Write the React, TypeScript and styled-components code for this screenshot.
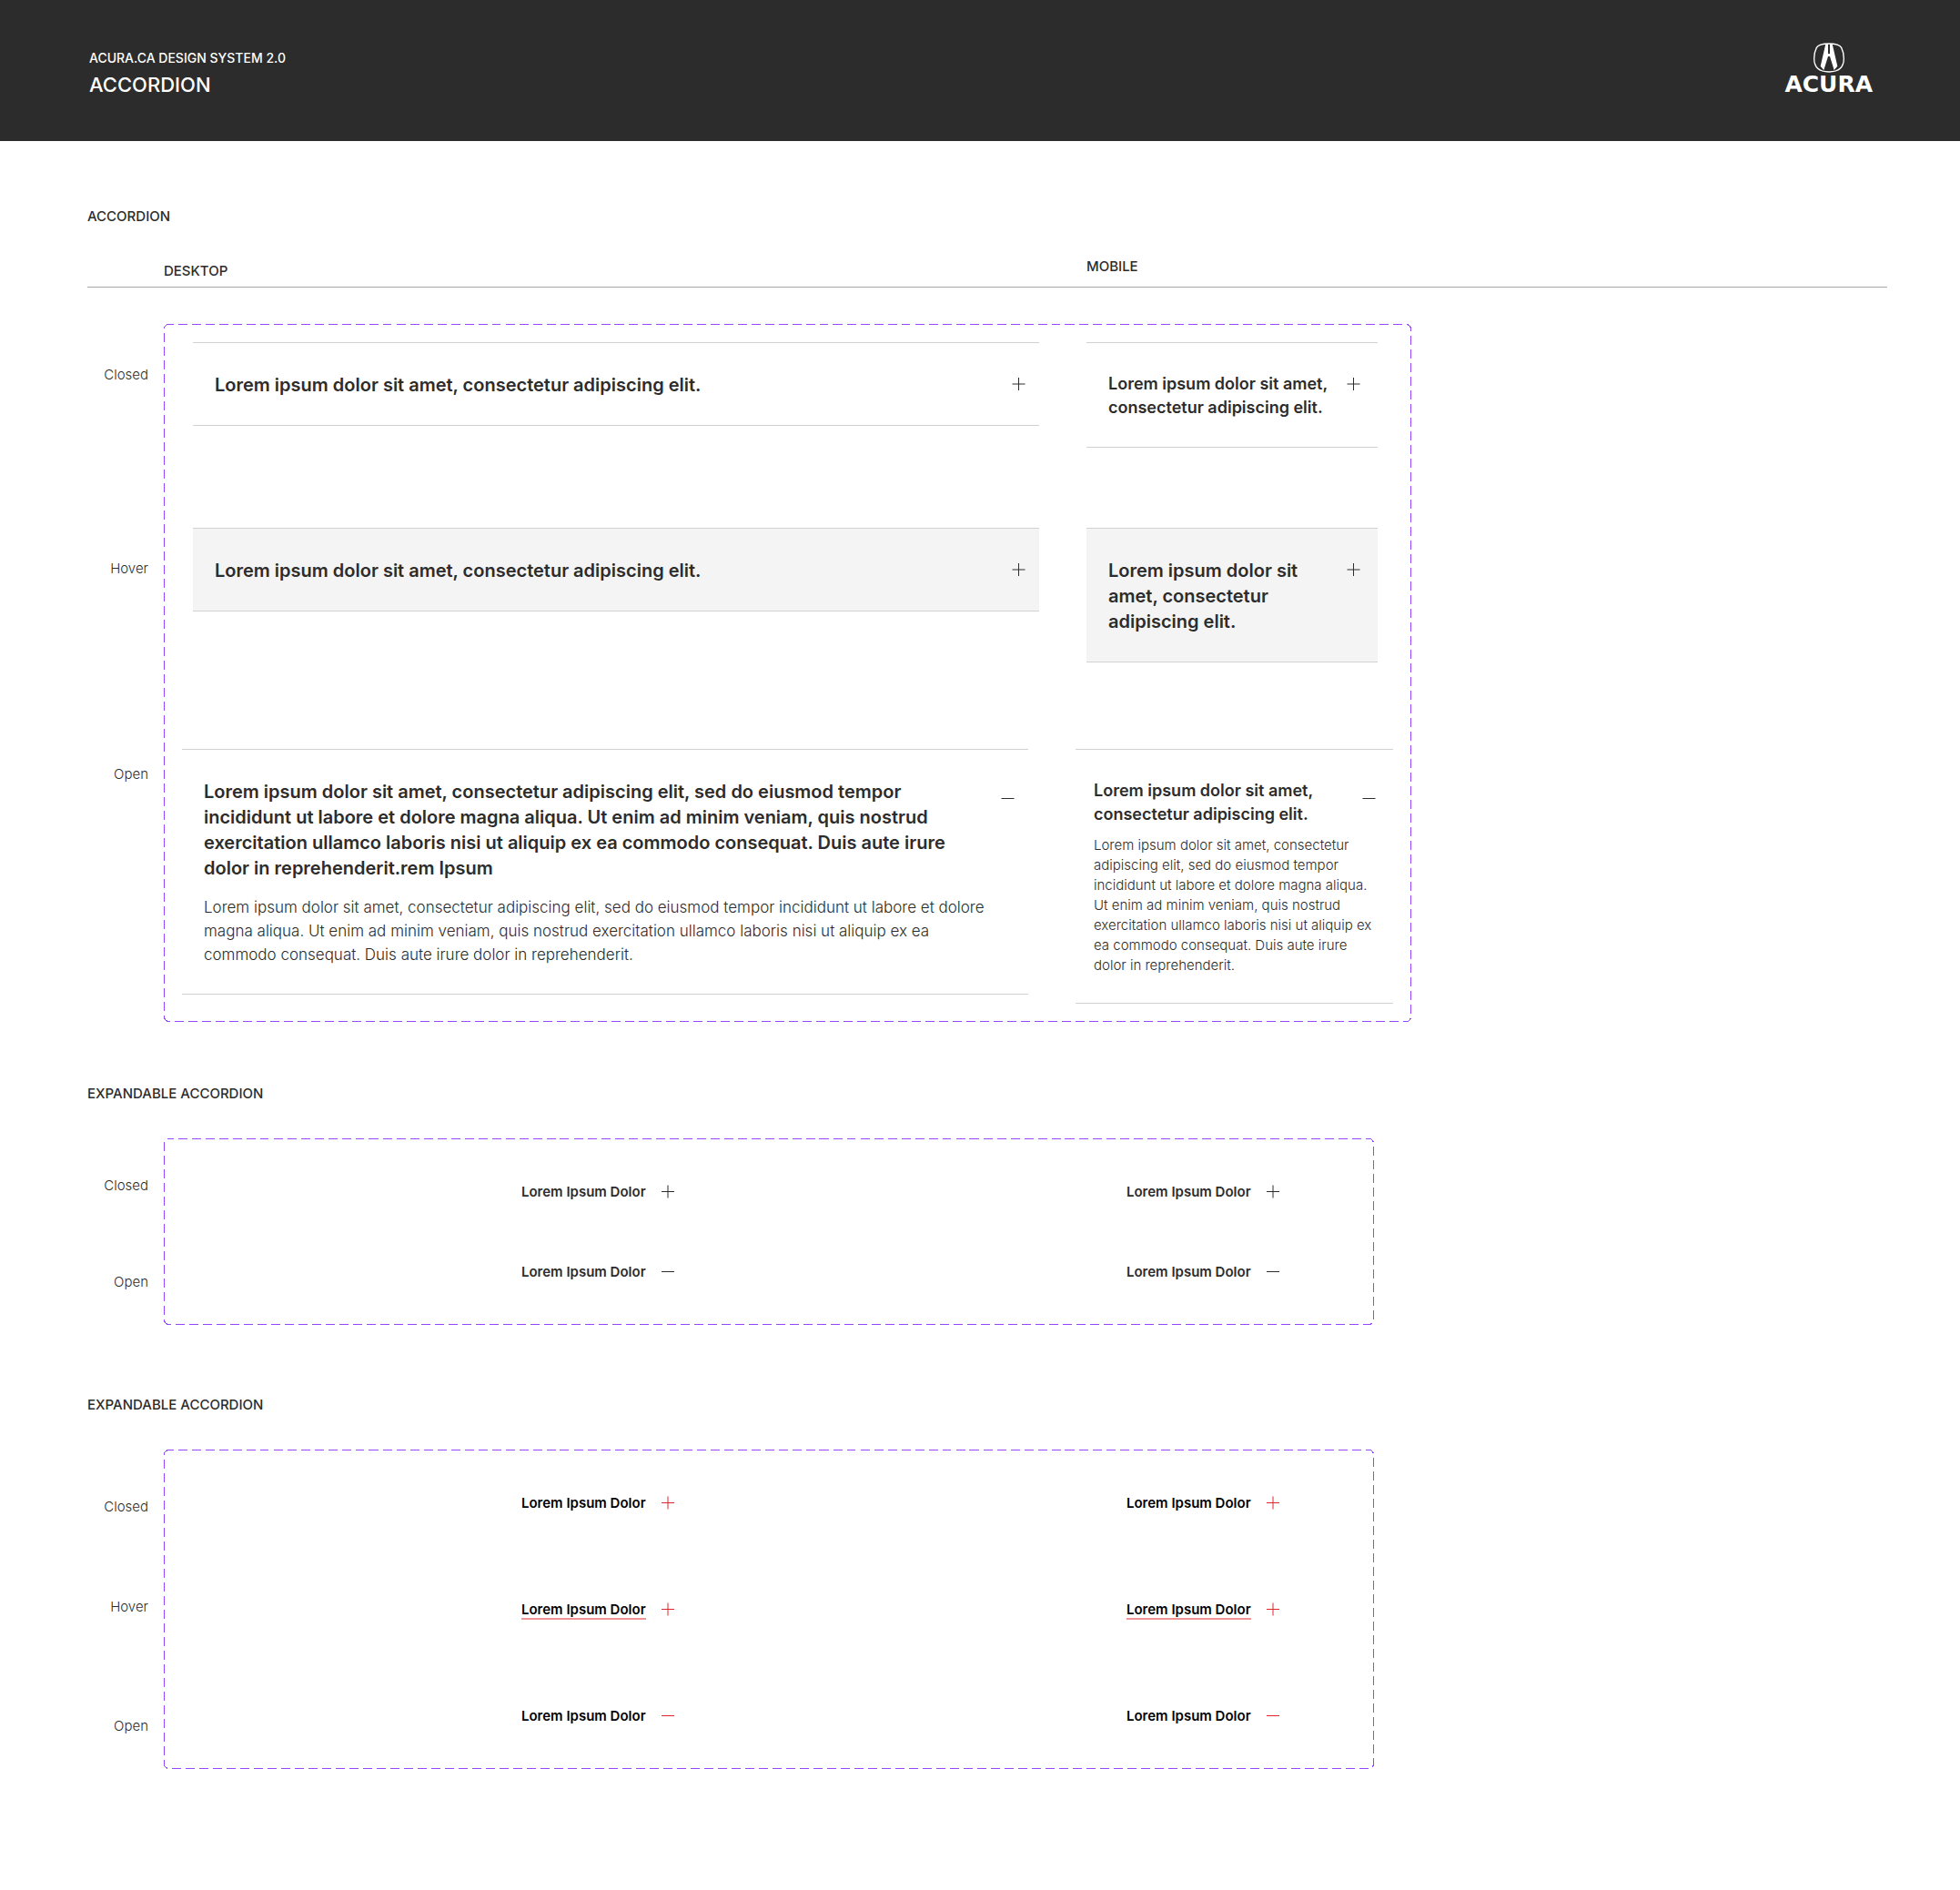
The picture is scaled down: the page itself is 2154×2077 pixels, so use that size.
import React from "react";
import styled, { createGlobalStyle } from "styled-components";

const ink = "#2c2c2c";
const red = "#e0262c";

const GlobalStyle = createGlobalStyle`
  *, *::before, *::after { box-sizing: border-box; }
  body {
    margin: 0;
    background: #ffffff;
    color: ${ink};
    font-family: Inter, "Liberation Sans", sans-serif;
  }
  h1, h2, h3, p { margin: 0; }
`;

/* ---------- Page header ---------- */

const PageHeader = styled.header`
  display: flex;
  justify-content: space-between;
  align-items: flex-start;
  padding: 47px 96px 48px 98px;
  background: ${ink};
  color: #ffffff;
`;

const Heading = styled.div`
  display: flex;
  flex-direction: column;
  gap: 7px;
  padding-top: 9px;
`;

const Eyebrow = styled.p`
  font-size: 14px;
  line-height: 16px;
  font-weight: 500;
`;

const PageTitle = styled.h1`
  font-size: 22px;
  line-height: 28px;
  font-weight: 500;
`;

const Brand = styled.div`
  display: flex;
  flex-direction: column;
  align-items: center;
  gap: 4px;
`;

const Wordmark = styled.span`
  font-family: "DejaVu Sans", sans-serif;
  font-size: 25px;
  line-height: 18px;
  font-weight: 700;
`;

function Emblem() {
  return (
    <svg width="34" height="33" viewBox="0 0 102 99" fill="none" aria-hidden="true">
      <path
        d="M51 3C73 3 86 5 92 16C98 28 100 42 100 52C100 84 79 96 51 96C23 96 2 84 2 52C2 42 4 28 10 16C16 5 29 3 51 3Z"
        stroke="#ffffff"
        strokeWidth="4"
      />
      <path
        d="M40 4L48 4L48 36H54L54 4L62 4L79 77L68 90L54 45H48L34 90L23 77Z"
        fill="#ffffff"
      />
    </svg>
  );
}

/* ---------- Sections ---------- */

const Main = styled.main`
  padding: 72px 80px 133px 96px;
`;

const Section = styled.section<{ $before?: number }>`
  margin-top: ${(p) => p.$before ?? 0}px;
`;

const SectionTitle = styled.h2`
  font-size: 15px;
  line-height: 22px;
  font-weight: 500;
`;

const ColumnHeads = styled.div`
  display: grid;
  grid-template-columns: 1014px 1fr;
  align-items: end;
  margin-top: 33px;
  padding-left: 84px;
  border-bottom: 1px solid #a6a6a6;
`;

const ColumnHead = styled.h3<{ $below: number }>`
  padding-bottom: ${(p) => p.$below}px;
  font-size: 15px;
  line-height: 22px;
  font-weight: 500;
`;

const Board = styled.div<{ $max: number; $before: number }>`
  display: grid;
  grid-template-columns: 84px minmax(0, 1fr);
  max-width: ${(p) => p.$max + 84}px;
  margin-top: ${(p) => p.$before}px;
`;

const States = styled.div<{ $top: number; $rows: string }>`
  display: grid;
  grid-template-rows: ${(p) => p.$rows};
  align-content: start;
  justify-items: end;
  padding: ${(p) => p.$top}px 17px 0 0;
`;

const StateLabel = styled.span`
  font-size: 15px;
  line-height: 22px;
  font-weight: 300;
`;

const FrameBox = styled.div`
  position: relative;
`;

const Outline = styled.svg`
  position: absolute;
  inset: 0;
  width: calc(100% - 1px);
  height: calc(100% - 1px);
  overflow: visible;
  pointer-events: none;
`;

function Frame({ children }: { children: React.ReactNode }) {
  return (
    <FrameBox>
      {children}
      <Outline aria-hidden="true">
        <rect
          x="0.5"
          y="0.5"
          width="100%"
          height="100%"
          rx="5"
          fill="none"
          stroke="#9747ff"
          strokeDasharray="10 5"
          strokeDashoffset="5"
          shapeRendering="crispEdges"
        />
      </Outline>
    </FrameBox>
  );
}

/* ---------- Icons ---------- */

const IconSvg = styled.svg<{ $drop?: number }>`
  flex: none;
  width: 24px;
  height: 24px;
  margin-top: ${(p) => p.$drop ?? 0}px;
`;

function Toggle({ open, cx, cy, drop, color = ink }: { open: boolean; cx: number; cy: number; drop?: number; color?: string }) {
  return (
    <IconSvg viewBox="0 0 24 24" $drop={drop} stroke={color} fill="none" aria-hidden="true">
      <path d={`M${cx - 7} ${cy}h14`} />
      {!open && <path d={`M${cx} ${cy - 7}v14`} />}
    </IconSvg>
  );
}

/* ---------- Accordion ---------- */

const Stack = styled.div`
  display: grid;
  grid-template-rows: 204px 243px auto;
  padding: 20px 0;
`;

const Pair = styled.div<{ $open?: boolean }>`
  display: grid;
  grid-template-columns: minmax(0, 1fr) ${(p) => (p.$open ? 349 : 320)}px;
  gap: 52px;
  align-items: start;
  padding: ${(p) => (p.$open ? "0 20px" : "0 37px 0 32px")};
`;

const Item = styled.article<{ $hover?: boolean; $small?: boolean; $left: number }>`
  padding: 32px ${(p) => (p.$small ? 14 : 10)}px 30px ${(p) => p.$left}px;
  border: solid #d2d2d2;
  border-width: 1px 0;
  background: ${(p) => (p.$hover ? "#f4f4f4" : "transparent")};
`;

const ItemButton = styled.button<{ $small?: boolean }>`
  display: flex;
  align-items: flex-start;
  justify-content: space-between;
  gap: ${(p) => (p.$small ? 12 : 32)}px;
  width: 100%;
  padding: 0;
  border: 0;
  background: none;
  color: inherit;
  font: inherit;
  text-align: left;
  cursor: pointer;
`;

const ItemTitle = styled.span<{ $compact?: boolean }>`
  font-size: ${(p) => (p.$compact ? 18 : 20)}px;
  line-height: ${(p) => (p.$compact ? 26 : 28)}px;
  font-weight: 600;
`;

const ItemBody = styled.p<{ $small?: boolean }>`
  margin-top: ${(p) => (p.$small ? 10 : 16)}px;
  padding-right: ${(p) => (p.$small ? 6 : 30)}px;
  font-size: ${(p) => (p.$small ? 15 : 17)}px;
  line-height: ${(p) => (p.$small ? 22 : 26)}px;
  font-weight: 300;
`;

type AccordionProps = {
  title: string;
  body?: string;
  hover?: boolean;
  small?: boolean;
  compact?: boolean;
};

function Accordion({ title, body, hover, small, compact }: AccordionProps) {
  const open = body !== undefined;
  return (
    <Item $hover={hover} $small={small} $left={open && small ? 20 : 24}>
      <ItemButton type="button" aria-expanded={open} $small={small}>
        <ItemTitle $compact={compact}>{title}</ItemTitle>
        <Toggle open={open} cx={11.5} cy={open ? 12.5 : 12} drop={open ? 9 : 1} />
      </ItemButton>
      {open && <ItemBody $small={small}>{body}</ItemBody>}
    </Item>
  );
}

/* ---------- Expandable link ---------- */

const LinkGrid = styled.div<{ $gap: number }>`
  display: grid;
  grid-template-columns: 1fr 1fr;
  grid-auto-rows: 24px;
  row-gap: ${(p) => p.$gap}px;
  padding: 46px 0 47px;
`;

const LinkCell = styled.div`
  padding-left: 393px;
`;

const LinkButton = styled.button<{ $accent?: boolean }>`
  display: flex;
  align-items: flex-start;
  gap: 12px;
  padding: 0;
  border: 0;
  background: none;
  color: ${(p) => (p.$accent ? "#000000" : ink)};
  font: inherit;
  white-space: nowrap;
  cursor: pointer;
`;

const LinkText = styled.span<{ $underlined?: boolean }>`
  padding-top: 4px;
  font-size: 15px;
  line-height: 18px;
  font-weight: 600;
  box-shadow: ${(p) => (p.$underlined ? "0 2px 0 #f09396" : "none")};
`;

type State = "Closed" | "Hover" | "Open";

function Expandable({ state, accent }: { state: State; accent?: boolean }) {
  return (
    <LinkCell>
      <LinkButton type="button" aria-expanded={state === "Open"} $accent={accent}>
        <LinkText $underlined={state === "Hover"}>Lorem Ipsum Dolor</LinkText>
        <Toggle open={state === "Open"} cx={12} cy={12.5} color={accent ? red : ink} />
      </LinkButton>
    </LinkCell>
  );
}

function ExpandableSection({ before, states, top, rows, gap, accent }: {
  before: number;
  states: State[];
  top: number;
  rows: string;
  gap: number;
  accent?: boolean;
}) {
  return (
    <Section $before={before}>
      <SectionTitle>EXPANDABLE ACCORDION</SectionTitle>
      <Board $max={1330} $before={38}>
        <States $top={top} $rows={rows}>
          {states.map((s) => (
            <StateLabel key={s}>{s}</StateLabel>
          ))}
        </States>
        <Frame>
          <LinkGrid $gap={gap}>
            {states.map((s) => (
              <React.Fragment key={s}>
                <Expandable state={s} accent={accent} />
                <Expandable state={s} accent={accent} />
              </React.Fragment>
            ))}
          </LinkGrid>
        </Frame>
      </Board>
    </Section>
  );
}

const short = "Lorem ipsum dolor sit amet, consectetur adipiscing elit.";
const longTitle =
  "Lorem ipsum dolor sit amet, consectetur adipiscing elit, sed do eiusmod tempor incididunt ut labore et dolore magna aliqua. Ut enim ad minim veniam, quis nostrud exercitation ullamco laboris nisi ut aliquip ex ea commodo consequat. Duis aute irure dolor in reprehenderit.rem Ipsum";
const copy =
  "Lorem ipsum dolor sit amet, consectetur adipiscing elit, sed do eiusmod tempor incididunt ut labore et dolore magna aliqua. Ut enim ad minim veniam, quis nostrud exercitation ullamco laboris nisi ut aliquip ex ea commodo consequat. Duis aute irure dolor in reprehenderit.";

export default function App() {
  return (
    <>
      <GlobalStyle />
      <PageHeader>
        <Heading>
          <Eyebrow>ACURA.CA DESIGN SYSTEM 2.0</Eyebrow>
          <PageTitle>ACCORDION</PageTitle>
        </Heading>
        <Brand>
          <Emblem />
          <Wordmark>ACURA</Wordmark>
        </Brand>
      </PageHeader>
      <Main>
        <Section>
          <SectionTitle>ACCORDION</SectionTitle>
          <ColumnHeads>
            <ColumnHead $below={6}>DESKTOP</ColumnHead>
            <ColumnHead $below={11}>MOBILE</ColumnHead>
          </ColumnHeads>
          <Board $max={1371} $before={40}>
            <States $top={45} $rows="213px 226px auto">
              <StateLabel>Closed</StateLabel>
              <StateLabel>Hover</StateLabel>
              <StateLabel>Open</StateLabel>
            </States>
            <Frame>
              <Stack>
                <Pair>
                  <Accordion title={short} />
                  <Accordion title={short} small compact />
                </Pair>
                <Pair>
                  <Accordion title={short} hover />
                  <Accordion title={short} hover small />
                </Pair>
                <Pair $open>
                  <Accordion title={longTitle} body={copy} />
                  <Accordion title={short} body={copy} small compact />
                </Pair>
              </Stack>
            </Frame>
          </Board>
        </Section>
        <ExpandableSection before={68} states={["Closed", "Open"]} top={41} rows="106px auto" gap={64} />
        <ExpandableSection before={77} states={["Closed", "Hover", "Open"]} top={52} rows="110px 131px auto" gap={93} accent />
      </Main>
    </>
  );
}
